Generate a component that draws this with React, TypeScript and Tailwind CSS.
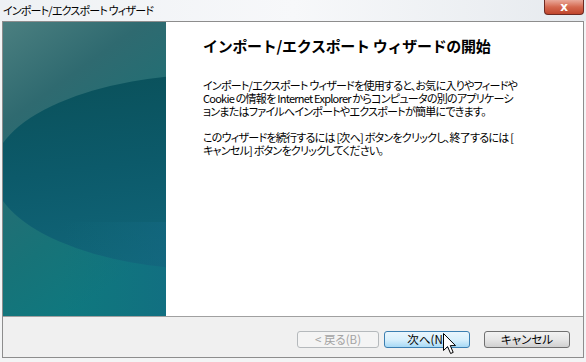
import React from 'react';

function SidePanel() {
  return (
    <svg width="163" height="294" viewBox="0 0 163 294" className="block">
      <defs>
        <linearGradient id="base" x1="0" y1="0" x2="0.4" y2="1">
          <stop offset="0" stopColor="#4b7f80" />
          <stop offset="0.3" stopColor="#2f6a70" />
          <stop offset="0.75" stopColor="#177378" />
          <stop offset="1" stopColor="#0f787f" />
        </linearGradient>
        <linearGradient id="ell" x1="0" y1="0" x2="0.3" y2="1">
          <stop offset="0" stopColor="#0a5059" />
          <stop offset="0.5" stopColor="#0c5a6a" />
          <stop offset="1" stopColor="#11667a" />
        </linearGradient>
        <linearGradient id="lowR" x1="0" y1="0" x2="1" y2="0">
          <stop offset="0" stopColor="#126d7c" stopOpacity="0" />
          <stop offset="1" stopColor="#146883" stopOpacity="0.9" />
        </linearGradient>
      </defs>
      <rect width="163" height="294" fill="url(#base)" />
      <ellipse cx="215" cy="150" rx="225" ry="98" fill="url(#ell)" />
      <rect x="60" y="200" width="103" height="94" fill="url(#lowR)" opacity="0.6" />
    </svg>
  );
}

function Cursor() {
  return (
    <svg width="14" height="22" viewBox="0 0 14 22" className="absolute left-[443px] top-[333px]">
      <path
        d="M0.5 0.5 L0.5 17.5 L4.6 13.6 L7.6 20.5 L10.2 19.4 L7.3 12.6 L12.5 12.6 Z"
        fill="#ffffff"
        stroke="#000000"
        strokeWidth="1"
      />
    </svg>
  );
}

const intro = [
  'インポート/エクスポート ウィザードを使用すると、お気に入りやフィードや',
  'Cookie の情報を Internet Explorer からコンピュータの別のアプリケーシ',
  'ョンまたはファイルへインポートやエクスポートが簡単にできます。',
];

const howTo = [
  'このウィザードを続行するには [次へ] ボタンをクリックし、終了するには [',
  'キャンセル] ボタンをクリックしてください。',
];

export default function App() {
  return (
    <div className="relative w-[586px] h-[362px] overflow-hidden bg-[#f3f4f5] text-black font-['Noto_Sans_CJK_JP','Noto_Sans',sans-serif]">
      {/* Title bar */}
      <div className="relative h-[21px] bg-gradient-to-r from-[#eef1f4] via-[#f7f8fa] to-[#e6eaee]">
        <div className="absolute left-[3px] top-[3px] text-[11px] leading-[14px] whitespace-nowrap [font-feature-settings:'palt'] tracking-[-0.8px]">
          インポート/エクスポート ウィザード
        </div>
        <div className="absolute left-[544px] top-0 w-[40px] h-[15px] rounded-b-[4px] border border-t-0 border-[#6e2a22] bg-gradient-to-b from-[#e9a99b] via-[#d4684f] to-[#c0452c] flex items-center justify-center">
          <span className="text-[12px] leading-none font-bold text-white font-['DejaVu_Sans',sans-serif]">x</span>
        </div>
      </div>

      {/* Content frame */}
      <div className="ml-[2px] w-[582px] h-[337px] border border-[#8d8d8d] flex flex-col">
        <div className="flex h-[294px] bg-white">
          <div className="w-[163px] shrink-0">
            <SidePanel />
          </div>
          <div className="flex-1 pl-[37px] pt-[15px]">
            <h1 className="text-[15px] leading-[18px] font-bold whitespace-nowrap tracking-[-0.3px]">
              インポート/エクスポート ウィザードの開始
            </h1>
            <div className="mt-[24px] text-[11px] leading-[13px] whitespace-nowrap [font-feature-settings:'palt'] tracking-[-0.75px]">
              {intro.map((l) => (
                <div key={l}>{l}</div>
              ))}
              <div className="h-[13px]" />
              {howTo.map((l) => (
                <div key={l}>{l}</div>
              ))}
            </div>
          </div>
        </div>

        <div className="flex-1 border-t border-[#a0a0a0] bg-[#f0f0f0] flex justify-end items-start pt-[14px] pr-[13px] gap-[14px] text-[11.5px] [font-feature-settings:'palt']">
          <div className="flex gap-[5px]">
            <button className="w-[82px] h-[17px] rounded-[3px] border border-[#b5b9bc] bg-[#f4f4f4] text-[#a3a3a3] leading-[15px]">
              &lt; 戻る(B)
            </button>
            <button className="w-[86px] h-[17px] rounded-[3px] border border-[#3c7fb1] bg-gradient-to-b from-[#eaf6fd] via-[#d9f0fc] to-[#a7d9f5] leading-[15px]">
              次へ(N)
            </button>
          </div>
          <button className="w-[86px] h-[17px] rounded-[3px] border border-[#707070] bg-gradient-to-b from-[#f2f2f2] via-[#e6e6e6] to-[#d0d0d0] leading-[15px]">
            キャンセル
          </button>
        </div>
      </div>

      <Cursor />
    </div>
  );
}
